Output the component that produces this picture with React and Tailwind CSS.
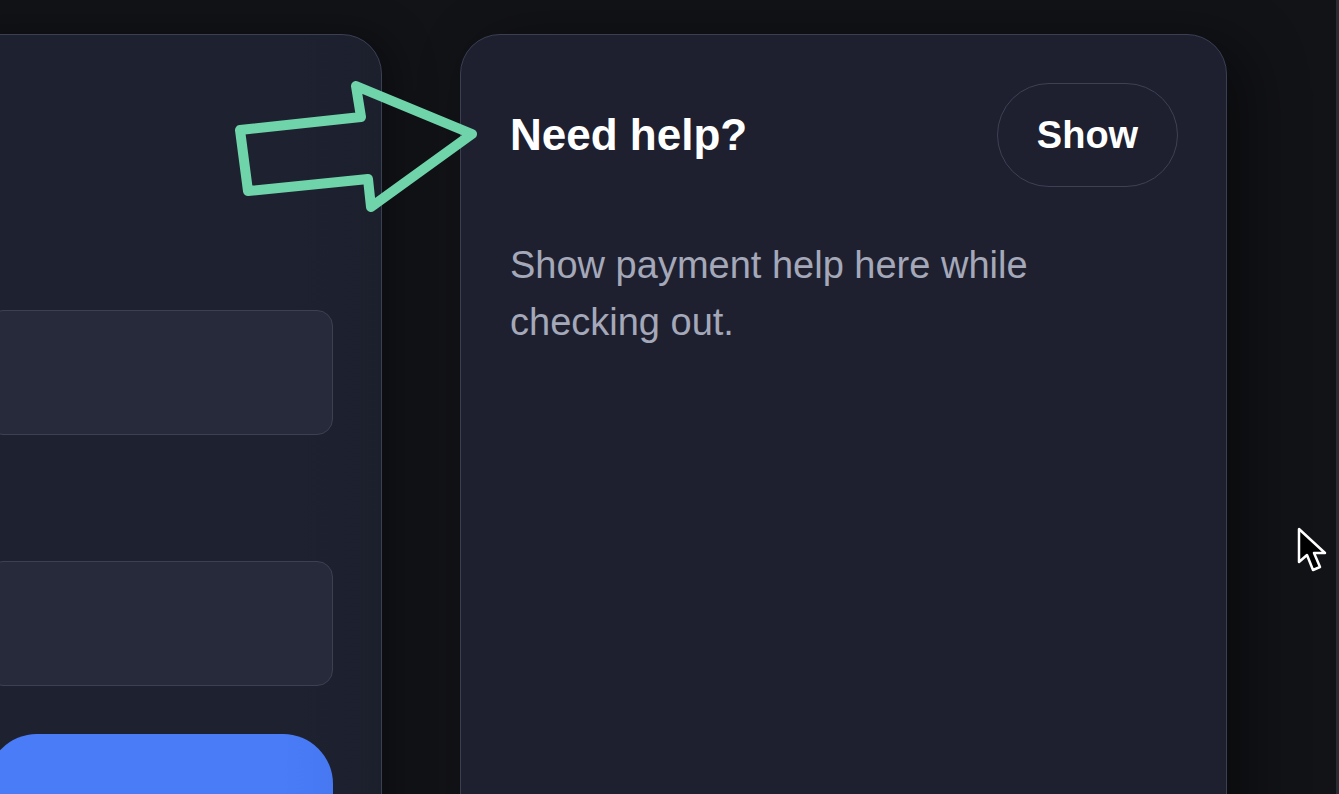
import React from "react";

function PointerArrow() {
  return (
    <svg
      className="absolute left-[228px] top-[74px]"
      width="260"
      height="148"
      viewBox="228 74 260 148"
      fill="none"
    >
      <path
        d="M240 130 L361 117 L356 86 L472 134 L371 207 L368 179 L248 191 Z"
        stroke="#6fd4aa"
        strokeWidth="10"
        strokeLinejoin="round"
      />
    </svg>
  );
}

function Cursor() {
  return (
    <svg
      className="absolute left-[1296px] top-[526px]"
      width="36"
      height="52"
      viewBox="0 0 36 52"
    >
      <path
        d="M3 3 L3 36 L11 29 L17 44 L24 41 L18 27 L29 27 Z"
        fill="#000"
        stroke="#fff"
        strokeWidth="2.5"
        strokeLinejoin="round"
      />
    </svg>
  );
}

export default function App() {
  return (
    <main
      className="relative h-[794px] w-[1339px] overflow-hidden bg-[#121317]"
      style={{ fontFamily: '"Liberation Sans", Arial, sans-serif' }}
    >
      <div className="flex items-start gap-[78px] pt-[34px]">
        {/* checkout form card, mostly cropped */}
        <section className="ml-[-62px] flex h-[900px] w-[444px] shrink-0 flex-col rounded-[40px] border border-[#3a3f53] bg-gradient-to-r from-[#1e2130] from-80% to-[#1c1f2c] px-12 pt-[275px] shadow-[12px_0_40px_rgba(0,0,0,0.35)]">
          <div className="h-[125px] rounded-2xl border border-[#3d4051] bg-[#272a3a]" />
          <div className="h-[126px]" />
          <div className="h-[125px] rounded-2xl border border-[#3d4051] bg-[#272a3a]" />
          <div className="h-[48px]" />
          <div className="h-[125px] rounded-[50px] bg-gradient-to-r from-[#4a7cf8] from-85% to-[#4778f2]" />
        </section>

        {/* help panel */}
        <section className="flex h-[900px] w-[767px] shrink-0 flex-col rounded-[40px] border border-[#3a3f53] bg-[#1e2030] pl-[49px] pr-[48px] pt-[48px] shadow-[20px_10px_60px_rgba(0,0,0,0.45)]">
          <div className="flex items-center justify-between">
            <h2 className="text-[44px] font-bold leading-none text-white">
              Need help?
            </h2>
            <button className="flex h-[104px] w-[181px] items-center justify-center rounded-full border border-[#3d4154] text-[38px] font-bold text-white">
              Show
            </button>
          </div>
          <p className="mt-[50px] w-[560px] text-[38px] leading-[57px] text-[#a4a8b8]">
            Show payment help here while checking out.
          </p>
        </section>
      </div>

      <div className="absolute right-0 top-0 h-full w-[3px] bg-[#2a2c31]" />
      <PointerArrow />
      <Cursor />
    </main>
  );
}
